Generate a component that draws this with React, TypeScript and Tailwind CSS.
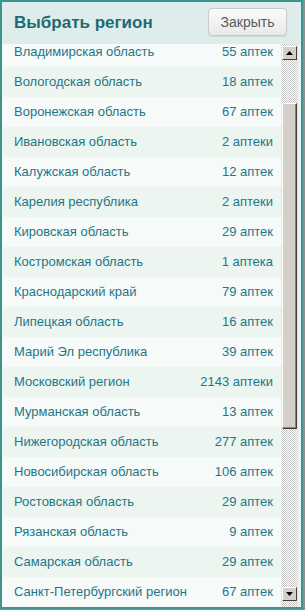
import React from "react";

const rows: [string, string][] = [
  ["Владимирская область", "55 аптек"],
  ["Вологодская область", "18 аптек"],
  ["Воронежская область", "67 аптек"],
  ["Ивановская область", "2 аптеки"],
  ["Калужская область", "12 аптек"],
  ["Карелия республика", "2 аптеки"],
  ["Кировская область", "29 аптек"],
  ["Костромская область", "1 аптека"],
  ["Краснодарский край", "79 аптек"],
  ["Липецкая область", "16 аптек"],
  ["Марий Эл республика", "39 аптек"],
  ["Московский регион", "2143 аптеки"],
  ["Мурманская область", "13 аптек"],
  ["Нижегородская область", "277 аптек"],
  ["Новосибирская область", "106 аптек"],
  ["Ростовская область", "29 аптек"],
  ["Рязанская область", "9 аптек"],
  ["Самарская область", "29 аптек"],
  ["Санкт-Петербургский регион", "67 аптек"],
];

function ArrowBtn({ up }: { up: boolean }) {
  return (
    <div className="w-[15px] h-[14px] bg-[#d4d0c8] border border-t-white border-l-white border-r-[#404040] border-b-[#404040] flex items-center justify-center">
      <svg width="7" height="4" viewBox="0 0 7 4">
        {up ? <polygon points="3.5,0 7,4 0,4" fill="#000" /> : <polygon points="0,0 7,0 3.5,4" fill="#000" />}
      </svg>
    </div>
  );
}

export default function App() {
  return (
    <div className="w-[305px] h-[610px] bg-[#8f8f8f] overflow-hidden" style={{ fontFamily: '"Liberation Sans", Arial, sans-serif' }}>
      <div className="w-[303px] h-[609px] border-2 border-[#3a958f] bg-white flex flex-col">
        <div className="h-[42px] bg-[#deecec] flex items-center justify-between pl-[12px] pr-[14px] shrink-0">
          <div className="text-[17px] font-bold text-[#1c6d73]">Выбрать регион</div>
          <button className="w-[79px] h-[28px] mt-[-2px] rounded-[4px] border border-[#c9cccc] bg-gradient-to-b from-[#fbfbfb] to-[#e9e9e9] text-[14px] text-[#5a5a5a] shadow-[0_1px_1px_rgba(0,0,0,0.08)]">
            Закрыть
          </button>
        </div>
        <div className="flex flex-1 min-h-0">
          <div className="w-[279px] overflow-hidden bg-[#f6faf8]">
            <div className="-mt-[7px]">
              {rows.map(([name, count], i) => (
                <div
                  key={name}
                  className={`h-[30px] flex items-center justify-between pl-[12px] pr-[8px] text-[13px] text-[#1f7688] ${i % 2 === 0 ? "bg-[#f6faf8]" : "bg-[#ecf5f0]"}`}
                >
                  <span>{name}</span>
                  <span>{count}</span>
                </div>
              ))}
            </div>
          </div>
          <div className="w-[17px] flex flex-col items-start pl-[1px] pt-[2px] pb-[6px] bg-[repeating-conic-gradient(#c8c8c8_0%_25%,#ffffff_0%_50%)] bg-[length:2px_2px]">
            <ArrowBtn up />
            <div className="h-[43px]" />
            <div className="w-[15px] h-[326px] bg-[#d4d0c8] border border-t-white border-l-white border-r-[#404040] border-b-[#404040] shadow-[inset_-1px_-1px_0_#808080]" />
            <div className="flex-1" />
            <ArrowBtn up={false} />
          </div>
          <div className="w-[3px] bg-[#f0f0f0]" />
        </div>
      </div>
    </div>
  );
}
